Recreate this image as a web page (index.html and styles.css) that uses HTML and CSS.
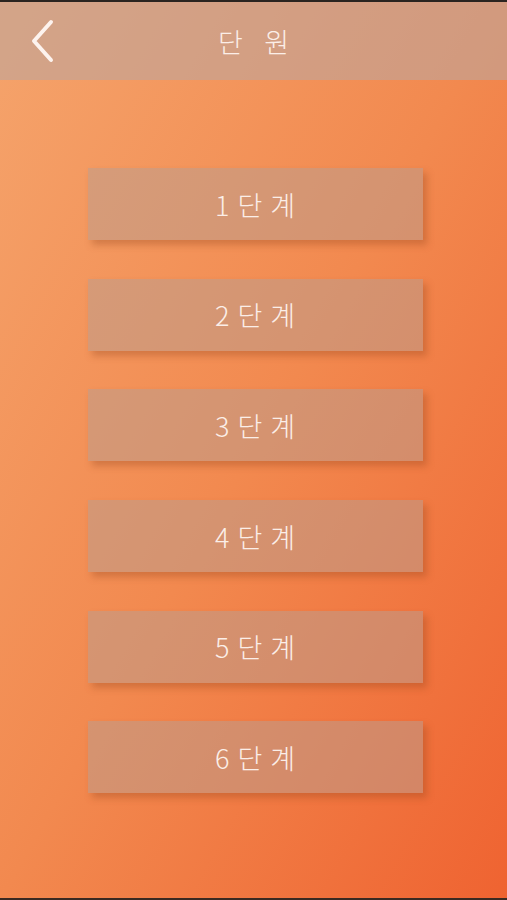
FILE: index.html
```html
<!DOCTYPE html>
<html lang="ko">
<head>
<meta charset="utf-8">
<title>단원</title>
<link rel="stylesheet" href="styles.css">
</head>
<body>
<div class="screen">
  <div class="topline"></div>
  <header class="header">
    <button class="back" aria-label="뒤로">
      <svg width="30" height="46" viewBox="0 0 30 46"><path d="M22 4 L5 23 L22 42" fill="none" stroke="#fdf3ee" stroke-width="4" stroke-linecap="round" stroke-linejoin="round"/></svg>
    </button>
    <h1 class="title">단 원</h1>
  </header>
  <main class="list">
    <button class="step">1단계</button>
    <button class="step">2단계</button>
    <button class="step">3단계</button>
    <button class="step">4단계</button>
    <button class="step">5단계</button>
    <button class="step">6단계</button>
  </main>
  <div class="bottomline"></div>
</div>
</body>
</html>
```
FILE: styles.css
```css
html, body {
  margin: 0;
  padding: 0;
}
body {
  font-family: "Noto Sans CJK KR", "Noto Sans", sans-serif;
}
.screen {
  width: 507px;
  height: 900px;
  display: flex;
  flex-direction: column;
  background: linear-gradient(to bottom right, #f5a46c 0%, #f2894f 50%, #ef6331 100%);
  overflow: hidden;
}
.topline {
  height: 2px;
  background: #2a2420;
  flex: none;
}
.bottomline {
  height: 2px;
  background: #3a2a22;
  flex: none;
}
.header {
  flex: none;
  height: 78px;
  background: rgba(190, 165, 155, 0.62);
  display: flex;
  align-items: center;
  justify-content: center;
  position: relative;
}
.back {
  position: absolute;
  left: 29px;
  top: 16px;
  width: 30px;
  height: 46px;
  padding: 0;
  border: 0;
  background: none;
  display: flex;
}
.title {
  margin: 0;
  font-size: 27px;
  font-weight: 300;
  color: #fbeee8;
  letter-spacing: 7px;
  padding-left: 7px;
  line-height: 1;
}
.list {
  flex: 1;
  display: flex;
  flex-direction: column;
  align-items: flex-start;
  padding: 88px 0 0 88px;
  gap: 38.7px;
}
.step {
  width: 335px;
  height: 72px;
  border: 0;
  padding: 0 0 0 7px;
  background: rgba(183, 158, 146, 0.5);
  box-shadow: 4px 5px 7px rgba(150, 70, 30, 0.35);
  color: #fbeee8;
  font-family: "Noto Sans CJK KR", "Noto Sans", sans-serif;
  font-size: 27px;
  font-weight: 300;
  letter-spacing: 8px;
  line-height: 1;
}
```
